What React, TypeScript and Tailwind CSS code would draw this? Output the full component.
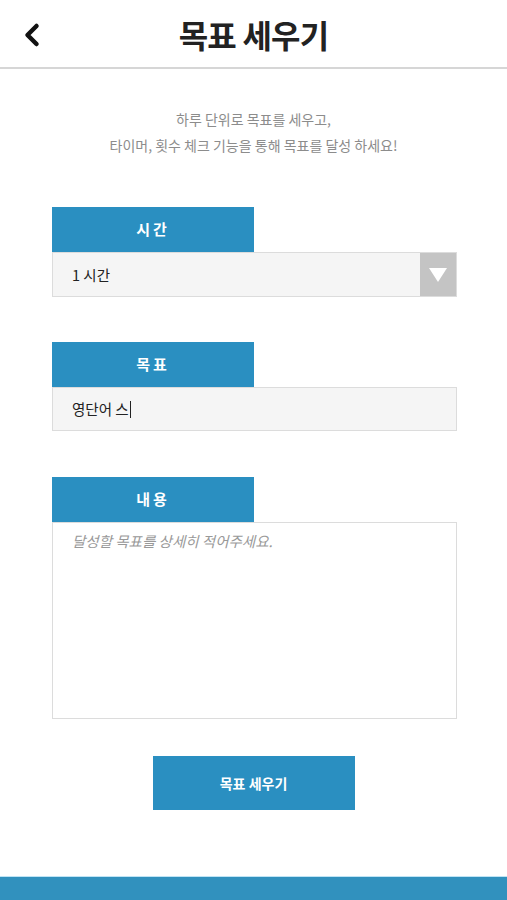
import { ChevronLeft } from "lucide-react";

const font = { fontFamily: '"Noto Sans CJK KR", "Noto Sans", sans-serif' };

function FieldLabel({ children }: { children: string }) {
  return (
    <div className="flex h-[45px] w-[202px] items-center justify-center bg-[#2a8fc1] text-[15px] font-bold tracking-[0.2em] text-white">
      {children}
    </div>
  );
}

export default function App() {
  return (
    <div
      className="relative flex h-[900px] w-[507px] flex-col overflow-hidden bg-white"
      style={font}
    >
      <header className="relative flex h-[69px] items-center justify-center border-b-2 border-[#d6d6d6]">
        <ChevronLeft
          className="absolute left-[14px] top-[17px] h-[36px] w-[36px] text-[#111]"
          strokeWidth={3}
        />
        <h1 className="text-[32px] font-bold tracking-tight text-[#222]">
          목표 세우기
        </h1>
      </header>

      <div className="mt-[37px] flex flex-col items-center text-[14px] leading-[26px] text-[#8c8c8c]">
        <p>하루 단위로 목표를 세우고,</p>
        <p>타이머, 횟수 체크 기능을 통해 목표를 달성 하세요!</p>
      </div>

      <div className="ml-[52px] mt-[49px] flex w-[405px] flex-col">
        <FieldLabel>시간</FieldLabel>
        <div className="flex h-[45px] border border-[#dcdcdc] bg-[#f5f5f5]">
          <div className="flex flex-1 items-center pl-[19px] text-[14.5px] text-[#222]">
            1 시간
          </div>
          <div className="flex w-[36px] items-center justify-center bg-[#c4c4c4]">
            <svg width="18" height="14" viewBox="0 0 18 14">
              <path d="M0 0h18L9 14z" fill="#fff" />
            </svg>
          </div>
        </div>

        <div className="mt-[45px]">
          <FieldLabel>목표</FieldLabel>
        </div>
        <div className="flex h-[44px] items-center border border-[#dcdcdc] bg-[#f5f5f5] pl-[19px] text-[14.5px] text-[#222]">
          영단어 스<span className="ml-[1px] h-[17px] w-[1px] bg-[#222]" />
        </div>

        <div className="mt-[46px]">
          <FieldLabel>내용</FieldLabel>
        </div>
        <div className="h-[197px] border border-[#dcdcdc] bg-white px-[19px] pt-[7px] text-[14.5px] italic text-[#999]">
          달성할 목표를 상세히 적어주세요.
        </div>
      </div>

      <div className="mt-[37px] flex justify-center">
        <button className="flex h-[54px] w-[202px] items-center justify-center bg-[#2a8fc1] text-[14px] font-bold text-white">
          목표 세우기
        </button>
      </div>

      <div className="mt-auto h-[24px] border-t border-[#bfe4f5] bg-[#3191be]" />
    </div>
  );
}
